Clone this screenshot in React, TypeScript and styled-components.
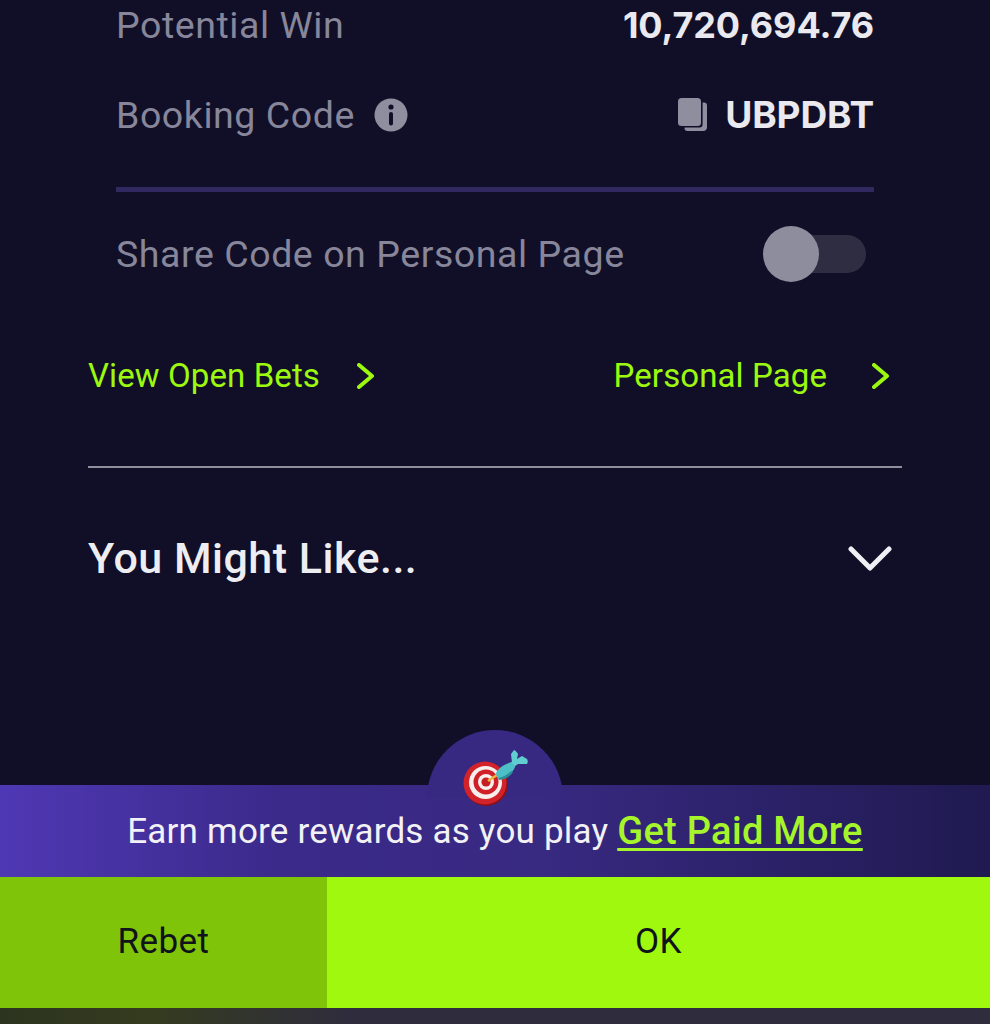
import React from "react";
import styled, { createGlobalStyle } from "styled-components";

const Global = createGlobalStyle`
  html, body { margin: 0; padding: 0; background: #100f27; }
  * { box-sizing: border-box; }
`;

const Page = styled.div`
  width: 990px;
  height: 1024px;
  overflow: hidden;
  display: flex;
  flex-direction: column;
  background: #100f27;
  font-family: Roboto, "Liberation Sans", sans-serif;
`;

const Details = styled.section`
  height: 315px;
  padding: 0 116px;
  display: flex;
  flex-direction: column;
`;

const InfoRow = styled.div<{ $h: number }>`
  height: ${(p) => p.$h}px;
  flex: none;
  display: flex;
  align-items: center;
  justify-content: space-between;
`;

const Label = styled.span`
  display: flex;
  align-items: center;
  gap: 19px;
  font-size: 37.5px;
  color: #87869a;
  letter-spacing: 0.56px;
`;

const Value = styled.span<{ $size: number }>`
  display: flex;
  align-items: center;
  gap: 18px;
  font-family: Inter, Roboto, sans-serif;
  font-weight: 700;
  font-size: ${(p) => p.$size}px;
  letter-spacing: -0.1px;
  color: #e9e9ef;
`;

const Rule = styled.div`
  flex: none;
  height: 5px;
  background: #30285f;
  margin-top: 8px;
`;

const Switch = styled.div`
  position: relative;
  width: 96px;
  height: 38px;
  margin-right: 8px;
  border-radius: 19px;
  background: #2f2d42;
`;

const Knob = styled.div`
  position: absolute;
  left: -7px;
  top: -9px;
  width: 56px;
  height: 56px;
  border-radius: 50%;
  background: #8e8d9d;
`;

const Links = styled.nav`
  height: 153px;
  margin: 0 88px;
  padding: 0 12px 30px 0;
  display: flex;
  align-items: center;
  justify-content: space-between;
  border-bottom: 2px solid #8f8e9c;
`;

const LinkItem = styled.a<{ $gap: number }>`
  display: flex;
  align-items: center;
  gap: ${(p) => p.$gap}px;
  font-size: 33px;
  letter-spacing: 0.1px;
  color: #9df80f;
`;

const Accordion = styled.div`
  height: 179px;
  margin: 0 88px;
  padding: 0 10px 0 0;
  display: flex;
  align-items: center;
  justify-content: space-between;
`;

const AccordionTitle = styled.h2`
  margin: 0;
  font-size: 43px;
  font-weight: 500;
  letter-spacing: 0.5px;
  color: #eeeef2;
`;

const Spacer = styled.div`
  flex: 1;
`;

const Banner = styled.div`
  position: relative;
  height: 92px;
  display: flex;
  align-items: center;
  justify-content: center;
  gap: 9px;
  background: linear-gradient(90deg, #4f38b4 0%, #3b2a8a 28%, #382981 55%, #1f1a50 100%);
`;

const Dome = styled.div`
  position: absolute;
  left: 427px;
  top: -55px;
  width: 136px;
  height: 68px;
  border-radius: 68px 68px 0 0;
  background: #372882;
`;

const DartIcon = styled.svg`
  position: absolute;
  left: 33px;
  top: 18px;
  width: 70px;
  height: 60px;
`;

const BannerText = styled.span`
  font-size: 35px;
  letter-spacing: 0.2px;
  color: #f2f2f6;
`;

const BannerLink = styled.a`
  font-size: 38px;
  font-weight: 500;
  letter-spacing: 0.3px;
  color: #a6f52b;
  text-decoration: underline;
  text-decoration-thickness: 3px;
  text-underline-offset: 4px;
`;

const Actions = styled.div`
  height: 131px;
  display: flex;
`;

const ActionButton = styled.button<{ $primary?: boolean }>`
  flex: ${(p) => (p.$primary ? "1" : "0 0 327px")};
  border: 0;
  padding: 0 0 3px;
  background: ${(p) => (p.$primary ? "#9ff80e" : "#80c40a")};
  color: #10131a;
  font-family: Roboto, sans-serif;
  font-size: 35px;
  letter-spacing: 0.45px;
`;

const BottomEdge = styled.div`
  height: 16px;
  background: linear-gradient(90deg, #2c3420 0%, #353b1e 15%, #2f2d3d 35%, #2f2d3d 100%);
`;

const Chevron = () => (
  <svg width="19" height="26" viewBox="0 0 19 26" fill="none">
    <path d="M3 2l13 11L3 24" stroke="#9df80f" strokeWidth="4" strokeLinecap="round" strokeLinejoin="round" />
  </svg>
);

const Info = () => (
  <svg width="34" height="34" viewBox="0 0 34 34">
    <circle cx="17" cy="17" r="16.5" fill="#8f8e9e" />
    <circle cx="17" cy="9" r="2.6" fill="#100f27" />
    <rect x="15" y="14" width="4" height="13.5" rx="2" fill="#100f27" />
  </svg>
);

const Copy = () => (
  <svg width="29" height="33" viewBox="0 0 29 33">
    <path d="M24.6 4.5H26a3 3 0 0 1 3 3V29a4 4 0 0 1-4 4H9.5a3 3 0 0 1-3-3v-.6h15a3 3 0 0 0 3.1-3z" fill="#8f8e9e" />
    <rect x="0" y="0" width="23" height="28" rx="3.5" fill="#8f8e9e" />
  </svg>
);

const Dart = () => (
  <DartIcon viewBox="0 0 70 60">
    <circle cx="26" cy="36" r="22" fill="#8f0f16" />
    <circle cx="25" cy="35" r="21.5" fill="#d3232a" />
    <circle cx="25.5" cy="34.5" r="16.5" fill="#f6efec" />
    <circle cx="26" cy="34" r="12.5" fill="#cf1f28" />
    <circle cx="26" cy="34" r="8" fill="#f6efec" />
    <circle cx="26" cy="34" r="4.6" fill="#c81c24" />
    <path d="M28 33l9-6" stroke="#e8b63a" strokeWidth="2.6" />
    <path d="M36 25c3-6 10-10 19-12 2 4-1 11-8 15-3 2-6 3-9 2-1-1-2-3-2-5z" fill="#4cc0c6" />
    <path d="M38 30c5-1 9-3 13-7l2 1c-3 5-9 8-14 8z" fill="#2a8f98" />
    <path d="M52 15l-1-9 3-4c2 1 3 2 4 4l-1 5 5-3 5 3c1 2 1 3 0 5l-9 0-3 2z" fill="#62cdd1" />
  </DartIcon>
);

export default function App() {
  return (
    <Page>
      <Global />
      <Details>
        <InfoRow $h={50}>
          <Label>Potential Win</Label>
          <Value $size={36}>10,720,694.76</Value>
        </InfoRow>
        <InfoRow $h={129}>
          <Label>
            Booking Code <Info />
          </Label>
          <Value $size={37}>
            <Copy /> UBPDBT
          </Value>
        </InfoRow>
        <Rule />
        <InfoRow $h={123}>
          <Label>Share Code on Personal Page</Label>
          <Switch>
            <Knob />
          </Switch>
        </InfoRow>
      </Details>
      <Links>
        <LinkItem $gap={36}>
          View Open Bets <Chevron />
        </LinkItem>
        <LinkItem $gap={44}>
          Personal Page <Chevron />
        </LinkItem>
      </Links>
      <Accordion>
        <AccordionTitle>You Might Like...</AccordionTitle>
        <svg width="44" height="26" viewBox="0 0 44 26" fill="none">
          <path d="M3 4l19 19L41 4" stroke="#f0f0f4" strokeWidth="5" strokeLinecap="round" strokeLinejoin="round" />
        </svg>
      </Accordion>
      <Spacer />
      <Banner>
        <Dome>
          <Dart />
        </Dome>
        <BannerText>Earn more rewards as you play</BannerText>
        <BannerLink>Get Paid More</BannerLink>
      </Banner>
      <Actions>
        <ActionButton>Rebet</ActionButton>
        <ActionButton $primary>OK</ActionButton>
      </Actions>
      <BottomEdge />
    </Page>
  );
}
